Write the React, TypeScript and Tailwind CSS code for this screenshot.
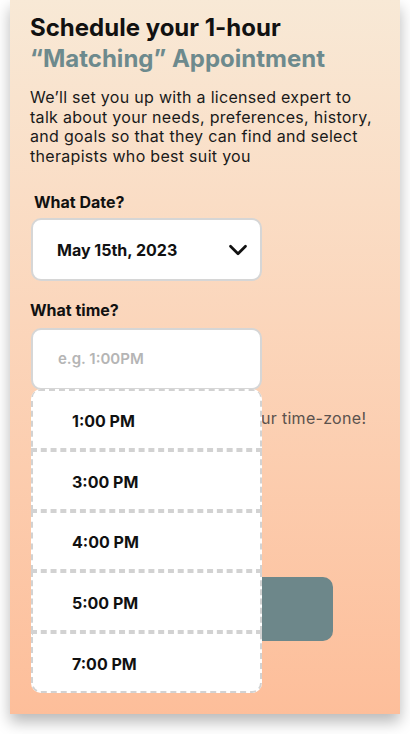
import { ChevronDown } from "lucide-react";

const times = ["1:00 PM", "3:00 PM", "4:00 PM", "5:00 PM", "7:00 PM"];

export default function App() {
  return (
    <div className="min-h-[734px] w-[410px] bg-white font-['Inter',sans-serif]">
      <div className="mx-[10px] h-[714px] w-[390px] bg-gradient-to-b from-[#f8e9d6] to-[#fdbe9a] px-5 pt-[12px] shadow-[0_8px_14px_rgba(0,0,0,0.28)]">
        <h1 className="text-[24px] font-bold leading-[31px] text-[#111]">
          Schedule your 1-hour
          <br />
          <span className="text-[#6d8a8d]">“Matching” Appointment</span>
        </h1>

        <p className="mt-[14px] text-[16px] leading-[19.5px] tracking-[0.3px] text-[#1a1a1a]">
          We’ll set you up with a licensed expert to talk about your needs, preferences, history, and goals so that they can find and select therapists who best suit you
        </p>

        <div className="mt-[24px] pl-[4px] text-[16px] font-bold text-[#111]">What Date?</div>
        <button className="ml-[1px] mt-[4px] flex h-[63px] w-[231px] items-center justify-between rounded-[10px] border-2 border-[#d6d6d6] bg-white pl-[24px] pr-[7px]">
          <span className="text-[16px] font-bold text-[#111]">May 15th, 2023</span>
          <ChevronDown size={30} strokeWidth={2.2} className="text-[#111]" />
        </button>

        <div className="mt-[17px] text-[16px] font-bold text-[#111]">What time?</div>
        <div className="relative ml-[1px] mt-[6px] w-[231px]">
          <div className="flex h-[62px] items-center rounded-[10px] border-2 border-[#d6d6d6] bg-white pl-[25px] text-[15px] font-semibold text-[#b5b5b5]">
            e.g. 1:00PM
          </div>
          <div className="absolute left-0 top-[61px] z-10 w-[231px] overflow-hidden rounded-[10px] bg-white">
            {times.map((t) => (
              <div
                key={t}
                className="flex h-[60.8px] items-center border-2 border-dashed border-[#d2d2d2] pl-[39px] pt-[3px] text-[16px] font-bold text-[#111] first:rounded-t-[8px] last:rounded-b-[10px]"
              >
                {t}
              </div>
            ))}
          </div>
        </div>

        <p className="mt-[16px] text-[16px] tracking-[0.3px] text-[#5b524d]">Please make sure this is in your time-zone!</p>

        <button className="ml-[4px] mt-[147px] h-[64px] w-[299px] rounded-[10px] bg-[#6d878a] text-[17px] font-bold text-white">
          Confirm
        </button>
      </div>
    </div>
  );
}
